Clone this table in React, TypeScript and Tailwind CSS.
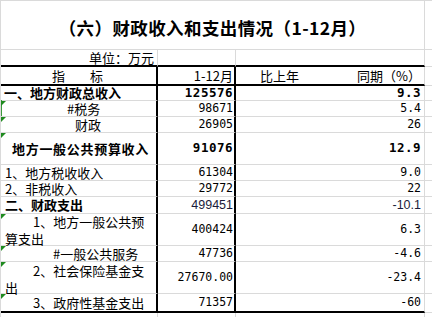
import type { ReactNode } from "react";

const cjk = "font-['Noto_Sans_CJK_SC',sans-serif]";
const mono = "font-['DejaVu_Sans_Mono',monospace]";

type RowProps = {
  h: string;
  label: ReactNode;
  value: ReactNode;
  pct: ReactNode;
  flag?: boolean;
  bar?: boolean;
  last?: boolean;
};

// little green corner mark excel puts on "number stored as text" cells
const Flag = () => (
  <span className="absolute left-0 top-0 w-[5px] h-[5px] bg-[#1f8a1f] [clip-path:polygon(0_0,100%_0,0_100%)]" />
);

const Row = ({ h, label, value, pct, flag, bar, last }: RowProps) => {
  const bottom = last ? "border-b-2 border-b-black" : "border-b border-b-[#dadada]";
  return (
    <div className={`flex ${h}`}>
      <div className={`relative w-[157px] shrink-0 border-r-2 border-r-black flex flex-col justify-center ${bottom}`}>
        {bar && <span className="absolute left-[-1px] top-[-1px] w-[2px] h-[16px] bg-[#3c9a3c]" />}
        {flag && <Flag />}
        {label}
      </div>
      <div className={`w-[78px] shrink-0 border-r-2 border-r-black flex items-center justify-end pr-[1px] ${bottom}`}>
        {value}
      </div>
      <div className={`w-[189px] shrink-0 border-r border-r-[#dadada] flex items-center justify-end pr-[3px] ${bottom}`}>
        {pct}
      </div>
      <div className="flex-1 border-b border-b-[#dadada]" />
    </div>
  );
};

const Num = ({ children }: { children: ReactNode }) => (
  <span className={`${mono} text-[11.5px] leading-none text-black`}>{children}</span>
);

const BoldNum = ({ children }: { children: ReactNode }) => (
  <span className={`${mono} text-[12.5px] font-bold leading-none text-black tracking-[0.5px]`}>{children}</span>
);

const Odd = ({ children }: { children: ReactNode }) => (
  <span className="font-['Liberation_Sans',sans-serif] text-[12.5px] leading-none text-[#1b1b3a]">{children}</span>
);

const Label = ({ children, pl, bold, tall }: { children: ReactNode; pl: string; bold?: boolean; tall?: boolean }) => (
  <span
    className={`${pl} whitespace-pre text-[13px] ${tall ? "leading-[17px]" : "leading-[14px]"} text-black ${bold ? "font-bold" : ""}`}
  >
    {children}
  </span>
);

export default function App() {
  return (
    <div className={`w-[432px] h-[317px] overflow-hidden bg-white border-l border-t border-[#dadada] ${cjk}`}>
      {/* title */}
      <div className="flex h-[49px]">
        <div className="w-[424px] shrink-0 border-r border-b border-[#dadada] flex items-center justify-center pt-[6px]">
          <span className="text-[17.5px] font-bold text-black tracking-[0.4px]">（六）财政收入和支出情况（1-12月）</span>
        </div>
        <div className="flex-1 border-b border-[#dadada]" />
      </div>

      {/* unit */}
      <div className="flex h-[17px]">
        <div className="w-[157px] shrink-0 border-r border-r-[#dadada] border-b-2 border-b-black flex items-center justify-end pr-[3px]">
          <span className="text-[13px] leading-none text-black">单位：万元</span>
        </div>
        <div className="w-[78px] shrink-0 border-r border-r-[#dadada] border-b-2 border-b-black" />
        <div className="w-[189px] shrink-0 border-r border-r-[#dadada] border-b-2 border-b-black" />
        <div className="flex-1 border-b border-b-[#dadada]" />
      </div>

      {/* header */}
      <div className="flex h-[19px]">
        <div className="w-[157px] shrink-0 border-r-2 border-r-black border-b-2 border-b-black flex items-center justify-center gap-[25px] pr-[2px]">
          <span className="text-[13px] leading-none text-black">指</span>
          <span className="text-[13px] leading-none text-black">标</span>
        </div>
        <div className="w-[78px] shrink-0 border-r-2 border-r-black border-b-2 border-b-black flex items-center justify-end pr-[1px]">
          <span className="text-[13px] leading-none text-black">1-12月</span>
        </div>
        <div className="w-[189px] shrink-0 border-r border-r-[#dadada] border-b-2 border-b-black flex items-center justify-between pl-[24px] pr-[3px]">
          <span className="text-[13px] leading-none text-black">比上年</span>
          <span className="text-[13px] leading-none text-black">同期（%）</span>
        </div>
        <div className="flex-1 border-b border-b-[#dadada]" />
      </div>

      <Row h="h-[15px]" label={<Label pl="pl-[3px]" bold>一、地方财政总收入</Label>} value={<BoldNum>125576</BoldNum>} pct={<BoldNum>9.3</BoldNum>} />
      <Row h="h-[16px]" flag bar label={<Label pl="pl-[66px]">#税务</Label>} value={<Num>98671</Num>} pct={<Num>5.4</Num>} />
      <Row h="h-[16px]" flag label={<Label pl="pl-[74px]">财政</Label>} value={<Num>26905</Num>} pct={<Num>26</Num>} />
      <Row h="h-[32px]" flag label={<Label pl="pl-[11px] tracking-[0.7px]" bold>地方一般公共预算收入</Label>} value={<BoldNum>91076</BoldNum>} pct={<BoldNum>12.9</BoldNum>} />
      <Row h="h-[16px]" label={<Label pl="pl-[4px]">1、地方税收收入</Label>} value={<Num>61304</Num>} pct={<Num>9.0</Num>} />
      <Row h="h-[16px]" label={<Label pl="pl-[4px]">2、非税收入</Label>} value={<Num>29772</Num>} pct={<Num>22</Num>} />
      <Row h="h-[17px]" label={<Label pl="pl-[4px]" bold>二、财政支出</Label>} value={<Odd>499451</Odd>} pct={<Odd>-10.1</Odd>} />
      <Row
        h="h-[32px]"
        flag
        label={
          <>
            <Label pl="pl-[32px]" tall>1、地方一般公共预</Label>
            <Label pl="pl-[4px]" tall>算支出</Label>
          </>
        }
        value={<Num>400424</Num>}
        pct={<Num>6.3</Num>}
      />
      <Row h="h-[16px]" flag label={<Label pl="pl-[52px]">#一般公共服务</Label>} value={<Num>47736</Num>} pct={<Num>-4.6</Num>} />
      <Row
        h="h-[32px]"
        flag
        label={
          <div className="pt-[2px]">
            <Label pl="pl-[32px] block" tall>2、社会保险基金支</Label>
            <Label pl="pl-[4px] block" tall>出</Label>
          </div>
        }
        value={<Num>27670.00</Num>}
        pct={<Num>-23.4</Num>}
      />
      <Row h="h-[19px]" flag last label={<Label pl="pl-[32px]">3、政府性基金支出</Label>} value={<Num>71357</Num>} pct={<Num>-60</Num>} />

      {/* next empty row */}
      <div className="flex h-[10px]">
        <div className="w-[157px] shrink-0 border-r border-r-[#dadada]" />
        <div className="w-[78px] shrink-0 border-r border-r-[#dadada]" />
        <div className="w-[189px] shrink-0 border-r border-r-[#dadada]" />
        <div className="flex-1" />
      </div>
    </div>
  );
}
